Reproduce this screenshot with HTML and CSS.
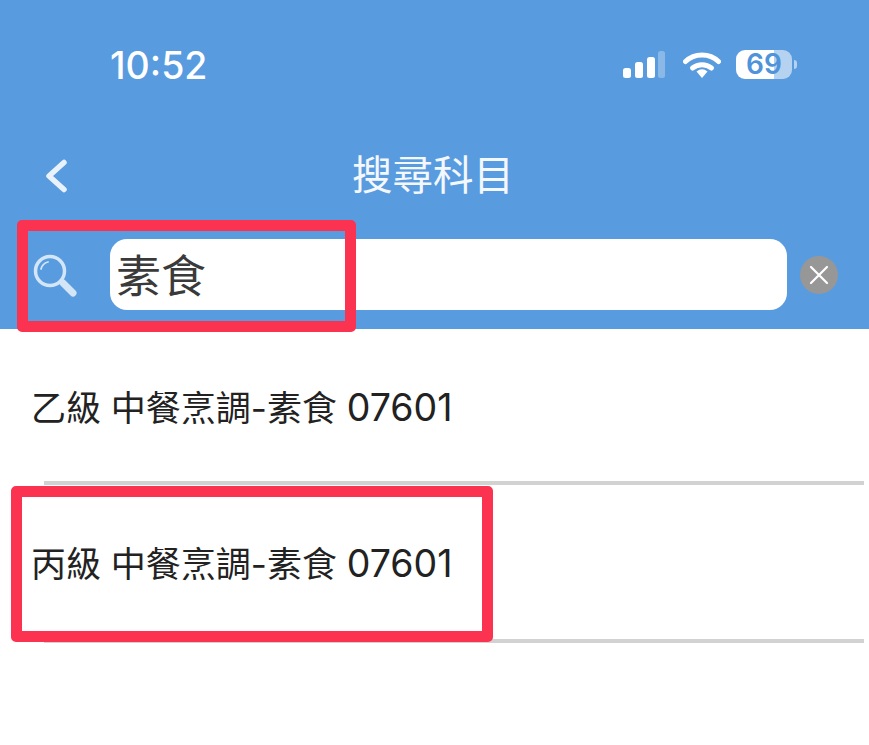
FILE: index.html
```html
<!DOCTYPE html>
<html lang="zh-Hant">
<head>
<meta charset="utf-8">
<title>搜尋科目</title>
<link rel="stylesheet" href="styles.css">
</head>
<body>
<div class="screen">
  <header class="top">
    <div class="status">
      <span class="time">10:52</span>
      <div class="status-icons">
        <svg class="signal" width="42" height="28" viewBox="0 0 42 28">
          <rect x="0" y="17" width="8" height="10" rx="2.500" fill="#fff"/>
          <rect x="12" y="11" width="8" height="16" rx="2.500" fill="#fff"/>
          <rect x="24" y="6" width="8" height="21" rx="2.500" fill="#fff"/>
          <rect x="35" y="0" width="7" height="27" rx="2.500" fill="#fff" opacity=".3"/>
        </svg>
        <svg class="wifi" width="38" height="28" viewBox="0 0 38 28">
          <path d="M2.500 10.500C11.500 1.800 26.500 1.800 35.500 10.500" fill="none" stroke="#fff" stroke-width="5" stroke-linecap="round"/>
          <path d="M9.500 17C15 12.500 23 12.500 28.500 17" fill="none" stroke="#fff" stroke-width="5" stroke-linecap="round"/>
          <path d="M13.500 20.500Q19 16 24.500 20.500L19 27Z" fill="#fff"/>
        </svg>
        <div class="battery">
          <div class="cell"><span class="level">69</span></div>
          <i class="cap"></i>
        </div>
      </div>
    </div>
    <div class="nav">
      <svg class="back" width="26" height="34" viewBox="0 0 26 34">
        <path d="M21 3.500L6 17L21 30.500" fill="none" stroke="#e9f2fb" stroke-width="5.500" stroke-linecap="round" stroke-linejoin="round"/>
      </svg>
      <h1 class="title">搜尋科目</h1>
    </div>
    <div class="search">
      <svg class="lens" width="44" height="44" viewBox="0 0 44 44">
        <circle cx="17" cy="17" r="14.500" fill="none" stroke="#d3e6f8" stroke-width="3.500"/>
        <path d="M8 15A9.500 9.500 0 0 1 15 8" fill="none" stroke="#d3e6f8" stroke-width="1.800" stroke-linecap="round"/>
        <path d="M30 29L40 39" stroke="#d3e6f8" stroke-width="7" stroke-linecap="round"/>
      </svg>
      <div class="field">素食</div>
      <div class="clear">
        <svg width="20" height="20" viewBox="0 0 20 20">
          <path d="M2 2L18 18M18 2L2 18" stroke="#fff" stroke-width="2.200" stroke-linecap="round"/>
        </svg>
      </div>
    </div>
  </header>
  <ul class="results">
    <li class="row">乙級 中餐烹調-素食 <span class="code">07601</span></li>
    <li class="row">丙級 中餐烹調-素食 <span class="code">07601</span></li>
  </ul>
  <div class="mark mark-search"></div>
  <div class="mark mark-row"></div>
</div>
</body>
</html>
```
FILE: styles.css
```css
* { box-sizing: border-box; }

html, body {
  margin: 0;
  height: 100%;
  background: #fff;
}

.screen {
  position: relative;
  width: 869px;
  height: 745px;
  overflow: hidden;
  font-family: "Inter", "Noto Sans CJK TC", sans-serif;
}

.top {
  height: 329px;
  background: #589bdf;
  display: flex;
  flex-direction: column;
}

.status {
  height: 130px;
  padding: 46px 72px 0 110px;
  display: flex;
  justify-content: space-between;
  align-items: flex-start;
}

.time {
  font-size: 37.500px;
  line-height: 40px;
  font-weight: 500;
  color: #fff;
}

.status-icons {
  display: flex;
  align-items: center;
  gap: 18px;
  padding-top: 4px;
}

.battery {
  display: flex;
  align-items: center;
  gap: 2px;
  margin-left: -3px;
}

.cell {
  width: 56px;
  height: 29px;
  border-radius: 9px;
  background: linear-gradient(90deg, #fff 0 68%, #b5d2f0 68% 100%);
  display: flex;
  align-items: center;
  justify-content: center;
}

.level {
  font-size: 28px;
  line-height: 29px;
  font-weight: 600;
  color: #4f93da;
}

.cap {
  width: 3px;
  height: 9px;
  border-radius: 0 3px 3px 0;
  background: #b5d2f0;
}

.nav {
  height: 92px;
  position: relative;
  display: flex;
  align-items: center;
  justify-content: center;
}

.back {
  position: absolute;
  left: 43px;
  top: 29px;
}

.title {
  margin: 0 0 0 -3px;
  font-size: 40.500px;
  line-height: 92px;
  font-weight: 400;
  color: #f4f8fd;
}

.search {
  height: 88px;
  padding: 17px 31px 0 33px;
  display: flex;
  align-items: flex-start;
}

.lens {
  flex: none;
  margin: 15px 33px 0 0;
}

.field {
  flex: 1;
  height: 71px;
  padding-left: 6px;
  padding-top: 2px;
  background: #fff;
  border-radius: 17px;
  font-size: 45px;
  line-height: 71px;
  color: #3a3a3a;
}

.clear {
  flex: none;
  width: 38px;
  height: 38px;
  margin: 17px 0 0 13px;
  border-radius: 50%;
  background: #979797;
  display: flex;
  align-items: center;
  justify-content: center;
}

.results {
  list-style: none;
  margin: 0;
  padding: 0;
}

.row {
  height: 156px;
  padding: 1px 0 0 31px;
  font-size: 35px;
  line-height: 155px;
  color: #222;
  position: relative;
}

.row + .row {
  margin-top: 2px;
  padding-top: 0;
  line-height: 153px;
}

.code {
  font-size: 37.500px;
}

/* hairline under each row, inset on both sides */
.row::after {
  content: "";
  position: absolute;
  left: 44px;
  right: 5px;
  bottom: 0;
  height: 4px;
  background: #d2d2d2;
}

/* red call-out frames drawn over the list and search bar */
.mark {
  position: absolute;
  border: 11px solid #fb3350;
  border-radius: 5px;
}

.mark-search {
  left: 17px;
  top: 220px;
  width: 339px;
  height: 112px;
}

.mark-row {
  left: 11px;
  top: 486px;
  width: 482px;
  height: 156px;
}
```
